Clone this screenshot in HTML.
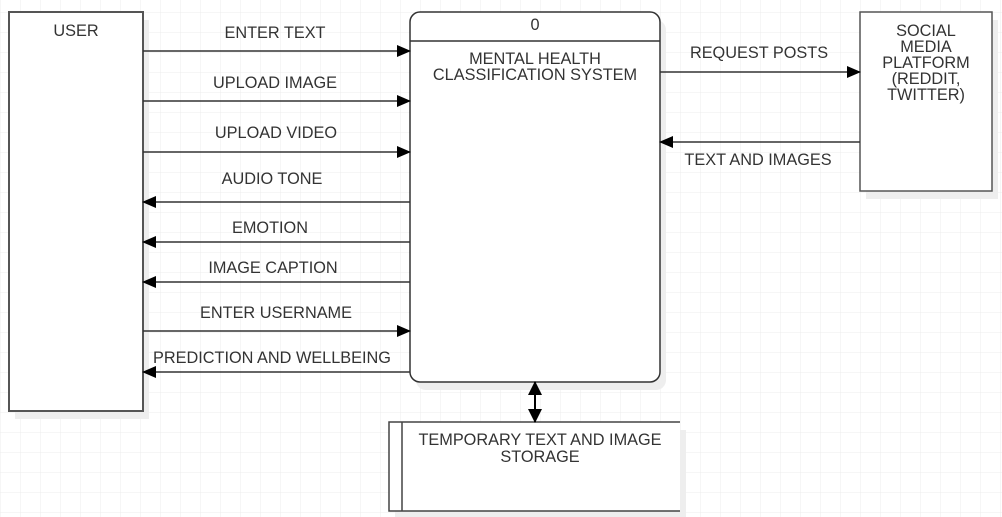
<!DOCTYPE html>
<html><head><meta charset="utf-8"><style>
body{margin:0;width:1002px;height:517px;overflow:hidden;background:#fff;}
svg{display:block}
text{font-family:"Liberation Sans",sans-serif;font-size:16.3px;fill:#333;text-anchor:middle}
</style></head><body>
<svg width="1002" height="517" xmlns="http://www.w3.org/2000/svg">
<defs>
<pattern id="g" width="20" height="20" patternUnits="userSpaceOnUse" x="0" y="12">
<path d="M0 0H20M0 0V20" stroke="#ececec" stroke-width="1" fill="none"/>
</pattern>
<marker id="a" markerWidth="14" markerHeight="14" refX="13" refY="7" orient="auto" markerUnits="userSpaceOnUse">
<path d="M0 1L14 7L0 13Z" fill="#000"/></marker>
<marker id="b" markerWidth="14" markerHeight="14" refX="13" refY="7" orient="auto-start-reverse" markerUnits="userSpaceOnUse">
<path d="M0 0L14 7L0 14Z" fill="#000"/></marker>
</defs>
<rect width="1002" height="517" fill="url(#g)"/>
<rect x="15" y="20" width="134" height="399" fill="#eee"/>
<rect x="416" y="20" width="250" height="370" rx="10" fill="#eee"/>
<rect x="866" y="20" width="132" height="179" fill="#eee"/>
<rect x="395" y="430" width="291" height="87" fill="#eee"/>
<rect x="9" y="12" width="134" height="399" fill="#fff" stroke="#555" stroke-width="2"/>
<text x="76" y="36">USER</text>
<rect x="410" y="12" width="250" height="370" rx="10" fill="#fff" stroke="#333" stroke-width="1.5"/>
<line x1="410" y1="41" x2="660" y2="41" stroke="#333" stroke-width="1.5"/>
<text x="535" y="30">0</text>
<text x="535" y="64">MENTAL HEALTH</text>
<text x="535" y="80">CLASSIFICATION SYSTEM</text>
<rect x="860" y="12" width="132" height="179" fill="#fff" stroke="#555" stroke-width="1.5"/>
<text x="926" y="36">SOCIAL</text>
<text x="926" y="52">MEDIA</text>
<text x="926" y="68">PLATFORM</text>
<text x="926" y="84">(REDDIT,</text>
<text x="926" y="100">TWITTER)</text>
<rect x="389" y="422" width="291" height="89" fill="#fff"/>
<path d="M680 422H389V511H680M402 422V511" fill="none" stroke="#444" stroke-width="1.5"/>
<text x="540" y="445">TEMPORARY TEXT AND IMAGE</text>
<text x="540" y="462">STORAGE</text>
<g stroke="#333" stroke-width="1.5" fill="none">
<line x1="143" y1="51" x2="410" y2="51" marker-end="url(#a)"/>
<line x1="143" y1="101" x2="410" y2="101" marker-end="url(#a)"/>
<line x1="143" y1="152" x2="410" y2="152" marker-end="url(#a)"/>
<line x1="410" y1="202" x2="143" y2="202" marker-end="url(#a)"/>
<line x1="410" y1="242" x2="143" y2="242" marker-end="url(#a)"/>
<line x1="410" y1="282" x2="143" y2="282" marker-end="url(#a)"/>
<line x1="143" y1="331" x2="410" y2="331" marker-end="url(#a)"/>
<line x1="410" y1="372" x2="143" y2="372" marker-end="url(#a)"/>
<line x1="660" y1="72" x2="860" y2="72" marker-end="url(#a)"/>
<line x1="860" y1="142" x2="660" y2="142" marker-end="url(#a)"/>
<line x1="535" y1="382" x2="535" y2="422" stroke="#000" stroke-width="2" marker-start="url(#b)" marker-end="url(#b)"/>
</g>
<text x="275" y="38">ENTER TEXT</text>
<text x="275" y="88">UPLOAD IMAGE</text>
<text x="276" y="138">UPLOAD VIDEO</text>
<text x="272" y="184">AUDIO TONE</text>
<text x="270" y="233">EMOTION</text>
<text x="273" y="273">IMAGE CAPTION</text>
<text x="276" y="318">ENTER USERNAME</text>
<text x="272" y="363">PREDICTION AND WELLBEING</text>
<text x="759" y="58">REQUEST POSTS</text>
<text x="758" y="165">TEXT AND IMAGES</text>
</svg>
</body></html>
